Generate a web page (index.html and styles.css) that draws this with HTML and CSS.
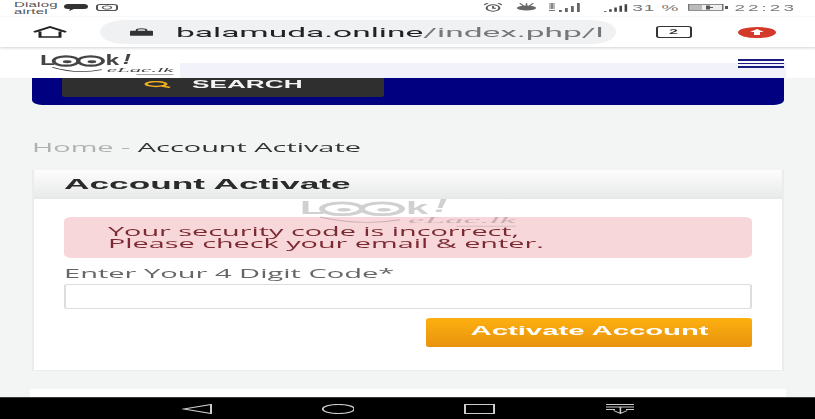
FILE: index.html
```html
<!DOCTYPE html>
<html lang="en">
<head>
<meta charset="utf-8">
<title>Account Activate</title>
<link rel="stylesheet" href="styles.css">
</head>
<body>
<div class="page">
  <div class="status">
    <div class="carrier">Dialog<br>airtel</div>
    <svg class="st-chat" viewBox="0 0 12 7"><path d="M2 0h8q2 0 2 2.500T10 5H5L2.500 7 3 5H2Q0 5 0 2.500T2 0z" fill="#333"/></svg>
    <svg class="st-insta" viewBox="0 0 11 7"><rect x=".5" y=".5" width="10" height="6" rx="1.600" fill="none" stroke="#555"/><ellipse cx="5.500" cy="3.500" rx="2.200" ry="1.600" fill="none" stroke="#555" stroke-width=".8"/></svg>
    <div class="st-right">
      <svg class="st-alarm" viewBox="0 0 9 9"><circle cx="4.500" cy="5" r="3.200" fill="none" stroke="#555"/><path d="M4.500 3v2.200h1.500M0 2l2-2M9 2L7 0" fill="none" stroke="#555" stroke-width=".9"/></svg>
      <svg class="st-eye" viewBox="0 0 11 9"><ellipse cx="5.500" cy="5" rx="5" ry="2.600" fill="#666"/><path d="M2 0l2 3M9 0L7 3M5.500 0v3" stroke="#666" stroke-width=".8"/></svg>
      <svg class="st-sig1" viewBox="0 0 16 9"><path d="M0 1h3M0 3h3M0 5h3M1.500 0v6M0 7.500h3" stroke="#777" stroke-width=".8"/><path d="M5 7h1.400v2H5zM8 5h1.400v4H8zM11 3h1.400v6H11zM14 0h1.400v9H14z" fill="#666"/></svg>
      <svg class="st-sig2" viewBox="0 0 14 9"><path d="M0 8h1.500v1H0zM3 6h1.500v3H3zM6 4h1.500v5H6zM9 2h1.500v7H9zM12 0h1.500v9H12z" fill="#444"/></svg>
      <span class="st-pct">31 %</span>
      <svg class="st-batt" viewBox="0 0 20 7"><rect x=".4" y=".4" width="17" height="6.200" fill="#eee" stroke="#666" stroke-width=".7"/><rect x="1" y="1" width="6" height="5" fill="#bbb"/><path d="M9 1.500h2v1.500h1.500v1h-1.500v1.500H9z" fill="#555"/><rect x="18.500" y="2" width="1.500" height="3" fill="#555"/></svg>
      <span class="st-time">22:23</span>
    </div>
  </div>

  <div class="toolbar">
    <svg class="tb-home" viewBox="0 0 18 12"><path d="M1 6L9 1l8 5M4 5.500V11h10V5.500" fill="none" stroke="#222" stroke-width="1.500"/></svg>
    <div class="url-pill">
      <svg class="tb-lock" viewBox="0 0 12 8"><path d="M3.500 3V2q0-1.500 2.500-1.500T8.500 2v1" fill="none" stroke="#333"/><rect x="0" y="2.700" width="12" height="5.300" rx=".6" fill="#333"/></svg>
      <span class="url"><span class="url-host">balamuda.online</span>/index.php/l</span>
    </div>
    <div class="tab-count">2</div>
    <svg class="tb-update" viewBox="0 0 19 11"><ellipse cx="9.500" cy="5.500" rx="9.500" ry="5.500" fill="#d43a2a"/><path d="M9.500 2l3.500 3h-2v3H8V5H6z" fill="#fff"/></svg>
  </div>

  <div class="main">
    <header class="site-head">
      <svg class="logo" viewBox="0 -3 110 35" preserveAspectRatio="none">
        <text x="0" y="17" class="logo-big">L</text>
        <ellipse cx="21" cy="11" rx="10" ry="6.500" fill="none" stroke="currentColor" stroke-width="3"/>
        <ellipse cx="41" cy="11" rx="10" ry="6.500" fill="none" stroke="currentColor" stroke-width="3"/>
        <ellipse cx="22" cy="12" rx="3.500" ry="2" fill="currentColor"/>
        <ellipse cx="42" cy="12" rx="3.500" ry="2" fill="currentColor"/>
        <text x="53" y="17" class="logo-big">k</text>
        <text x="67" y="15" class="logo-bang">!</text>
        <path d="M10 20 Q30 30 50 23" fill="none" stroke="currentColor" stroke-width="1"/>
        <text x="54" y="27" class="logo-small" textLength="54" lengthAdjust="spacingAndGlyphs">eLac.lk</text>
        <rect x="78" y="29.500" width="30" height="1.200" fill="currentColor" opacity=".6"/>
      </svg>
      <div class="strip"></div>
      <div class="burger"><i></i><i></i><i></i></div>
    </header>
    <div class="blue-bar">
      <div class="search-btn">
        <svg class="search-icon" viewBox="0 0 14 7"><ellipse cx="6" cy="3" rx="5" ry="2.400" fill="none" stroke="#eeb01e" stroke-width="1.500"/><path d="M9 5l4 1.500" stroke="#eeb01e" stroke-width="1.500"/></svg>
        <span class="search-label">SEARCH</span>
      </div>
    </div>
    <nav class="crumbs"><span class="crumb-home">Home -</span> Account Activate</nav>
    <section class="card">
      <h1 class="card-title"><span class="title-text">Account Activate</span></h1>
      <svg class="watermark" viewBox="0 -3 110 35" preserveAspectRatio="none">
        <text x="0" y="17" class="logo-big">L</text>
        <ellipse cx="21" cy="11" rx="10" ry="6.500" fill="none" stroke="currentColor" stroke-width="3"/>
        <ellipse cx="41" cy="11" rx="10" ry="6.500" fill="none" stroke="currentColor" stroke-width="3"/>
        <ellipse cx="22" cy="12" rx="3.500" ry="2" fill="currentColor"/>
        <ellipse cx="42" cy="12" rx="3.500" ry="2" fill="currentColor"/>
        <text x="53" y="17" class="logo-big">k</text>
        <text x="67" y="15" class="logo-bang">!</text>
        <path d="M10 20 Q30 30 50 23" fill="none" stroke="currentColor" stroke-width="1"/>
        <text x="54" y="27" class="logo-small" textLength="54" lengthAdjust="spacingAndGlyphs">eLac.lk</text>
        <rect x="78" y="29.500" width="30" height="1.200" fill="currentColor" opacity=".6"/>
      </svg>
      <div class="card-body">
        <div class="alert"><span class="alert-text">Your security code is incorrect,<br>Please check your email &amp; enter.</span></div>
        <label class="field-label" for="code"><span class="label-text">Enter Your 4 Digit Code*</span></label>
        <input class="field" id="code" type="text">
        <button class="submit" type="button"><span class="submit-text">Activate Account</span></button>
      </div>
    </section>
    <div class="card-next"></div>
  </div>

  <div class="navbar">
    <svg class="nav-back" viewBox="0 0 15 10"><path d="M14.500.5v9L.8 5z" fill="none" stroke="#ccc"/></svg>
    <svg class="nav-home" viewBox="0 0 16.500 10"><ellipse cx="8.250" cy="5" rx="7.900" ry="4.600" fill="none" stroke="#ccc"/></svg>
    <svg class="nav-recent" viewBox="0 0 15.500 10"><rect x=".5" y=".5" width="14.500" height="9" fill="none" stroke="#ccc"/></svg>
    <svg class="nav-down" viewBox="0 0 14.500 10"><path d="M0 .5h14.500M0 3h14.500M0 5.500h4.500M10 5.500h4.500M7.200 3.500V9.500M3.800 6.500l3.400 3 3.400-3" fill="none" stroke="#ccc" stroke-width=".8"/></svg>
  </div>
</div>
</body>
</html>
```

FILE: styles.css
```css
html, body {
  margin: 0;
  padding: 0;
  width: 815px;
  height: 419px;
  overflow: hidden;
  background: #fff;
}
.logo-big { font: bold 20px "Liberation Sans", sans-serif; fill: currentColor; }
.logo-bang { font: italic bold 20px "Liberation Sans", sans-serif; fill: currentColor; }
.logo-small { font: italic 9px "Liberation Serif", serif; fill: currentColor; }

.page {
  width: 407.5px;
  height: 419px;
  display: flex;
  flex-direction: column;
  transform: scaleX(2);
  transform-origin: 0 0;
  filter: blur(.35px);
  font-family: "Open Sans", sans-serif;
  overflow: hidden;
}

/* the whole capture is squashed vertically: text runs wider than the page scale */
.url, .search-label, .crumbs, .title-text, .alert-text, .label-text, .submit-text {
  display: inline-block;
  transform-origin: 0 50%;
  white-space: nowrap;
}

/* status bar */
.status {
  height: 17px;
  flex: none;
  display: flex;
  align-items: flex-start;
  padding-left: 7px;
  background: #fff;
  color: #555;
}
.carrier {
  width: 24.5px;
  font: 7.5px/7.5px "Liberation Sans", sans-serif;
  letter-spacing: .1px;
  padding-top: .5px;
}
.st-chat { width: 12px; height: 7px; margin: 4px 0 0 0; flex: none; }
.st-insta { width: 11px; height: 7px; margin: 4px 0 0 4px; flex: none; }
.st-right {
  margin-left: auto;
  display: flex;
  align-items: center;
  height: 15px;
  padding-right: 9px;
  font: 9.5px/15px "Liberation Sans", sans-serif;
  color: #777;
}
.st-alarm { width: 9px; height: 9px; }
.st-eye { width: 10.5px; height: 9px; margin-left: 7px; }
.st-sig1 { width: 17px; height: 9px; margin-left: 5.5px; }
.st-sig2 { width: 12px; height: 8px; margin-left: 10.5px; }
.st-pct { margin-left: 2.5px; letter-spacing: .5px; }
.st-batt { width: 20px; height: 7px; margin-left: 4px; }
.st-time { margin-left: 3.5px; letter-spacing: 1.5px; }

/* browser toolbar */
.toolbar {
  height: 30px;
  flex: none;
  display: flex;
  align-items: center;
  padding-left: 16px;
  background: #fff;
  box-shadow: 0 1px 2px rgba(0, 0, 0, .18);
  position: relative;
  z-index: 2;
}
.tb-home { width: 18px; height: 12px; flex: none; }
.url-pill {
  margin-left: 16px;
  width: 257.5px;
  height: 24px;
  flex: none;
  border-radius: 12px;
  background: #eff1f2;
  display: flex;
  align-items: center;
  padding-left: 15px;
  box-sizing: border-box;
}
.tb-lock { width: 11.500px; height: 8px; flex: none; }
.url {
  margin-left: 11.500px;
  font: 400 13.500px/24px Roboto, sans-serif;
  transform: scaleX(1.24);
  color: #777;
}
.url-host { color: #222; }
.tab-count {
  margin-left: 20px;
  width: 18.500px;
  height: 12px;
  flex: none;
  box-sizing: border-box;
  border: 1.500px solid #333;
  border-radius: 2px;
  font: bold 8px/9px "Liberation Sans", sans-serif;
  text-align: center;
  color: #333;
}
.tb-update { width: 19px; height: 11px; margin-left: 23px; flex: none; }

/* page */
.main {
  flex: 1;
  min-height: 0;
  background: #f3f5f5;
  overflow: hidden;
}
.site-head {
  height: 31px;
  position: relative;
  display: flex;
  background: #fff;
}
.logo {
  width: 68px;
  height: 25px;
  color: #444;
  margin: 4px 0 0 20px;
  flex: none;
}
.strip {
  margin: auto 15px 0 2px;
  flex: 1;
  height: 15px;
  background: #f2f2fa;
}
.burger {
  position: absolute;
  left: 368.500px;
  top: 12px;
  width: 23px;
  display: flex;
  flex-direction: column;
  gap: 2px;
}
.burger i {
  display: block;
  height: 1.500px;
  background: #1a1a80;
}
.blue-bar {
  margin: 0 15.500px;
  height: 27px;
  background: #000080;
  border-radius: 0 0 5px 5px;
}
.search-btn {
  margin-left: 15.500px;
  width: 161px;
  height: 19px;
  background: #2f2f2f;
  border-radius: 0 0 2px 2px;
  display: flex;
  align-items: flex-start;
  padding-left: 40.500px;
  box-sizing: border-box;
}
.search-icon { width: 14px; height: 7px; margin-top: 3px; flex: none; }
.search-label {
  margin-left: 10px;
  font: bold 11px/12px "Liberation Sans", sans-serif;
  transform: scaleX(1.19);
  color: #f4f4f4;
}
.crumbs {
  display: block;
  margin: 33px 0 14px 15.500px;
  font-size: 13px;
  line-height: 18px;
  transform: scaleX(1.11);
  color: #333;
}
.crumb-home { color: #b0b2b2; }
.card {
  position: relative;
  margin-left: 15.500px;
  width: 376.500px;
  height: 201px;
  box-sizing: border-box;
  background: #fff;
  border: 1px solid #ebeded;
  border-width: 0 1px 1px;
}
.card-title {
  margin: 0;
  height: 29px;
  padding-left: 15px;
  background: linear-gradient(#fdfdfd, #e7e8e8);
  font: bold 15px/27px "Liberation Sans", sans-serif;
  color: #2a2a2a;
}
.title-text { transform: scaleX(1.175); }
.watermark {
  position: absolute;
  left: 133px;
  top: 26px;
  width: 110px;
  height: 32px;
  color: #d0d0d0;
  z-index: 1;
  mix-blend-mode: multiply;
}
.card-body {
  padding: 18px 15.500px 0;
  display: flex;
  flex-direction: column;
}
.alert {
  height: 41px;
  box-sizing: border-box;
  padding: 8.500px 0 0 22px;
  border-radius: 4px;
  background: #f8d7da;
  color: #7a2a32;
  font-size: 12px;
  line-height: 12.500px;
}
.alert-text { transform: scaleX(1.2); }
.field-label {
  margin-top: 7px;
  margin-bottom: -1px;
  font-size: 12px;
  line-height: 18px;
  color: #666;
}
.label-text { transform: scaleX(1.21); }
.field {
  margin-top: 2px;
  height: 25px;
  box-sizing: border-box;
  border: 1px solid #dcdede;
  border-radius: 2px;
  background: #fff;
  padding: 0;
}
.submit {
  margin-top: 9px;
  align-self: flex-end;
  width: 162.250px;
  height: 29px;
  border: 0;
  border-radius: 2px;
  padding: 0 0 3px;
  background: linear-gradient(#fdb00f, #e8930f);
  color: #fff;
  font: bold 12px "Liberation Sans", sans-serif;
}
.submit-text { transform: scaleX(1.22); transform-origin: 50% 50%; }
.card-next {
  margin: 18px 0 0 15px;
  width: 377.500px;
  height: 40px;
  background: #fff;
}

/* android navigation */
.navbar {
  height: 22px;
  flex: none;
  box-sizing: border-box;
  background: #000;
  border-top: 1px solid #3a3a3a;
  display: flex;
  align-items: center;
  padding: 0 0 0 90.500px;
  gap: 55px;
}
.nav-back { width: 15px; height: 10px; flex: none; }
.nav-home { width: 16.500px; height: 10px; flex: none; }
.nav-recent { width: 15.500px; height: 10px; flex: none; }
.nav-down { width: 14.500px; height: 10px; flex: none; }
```
